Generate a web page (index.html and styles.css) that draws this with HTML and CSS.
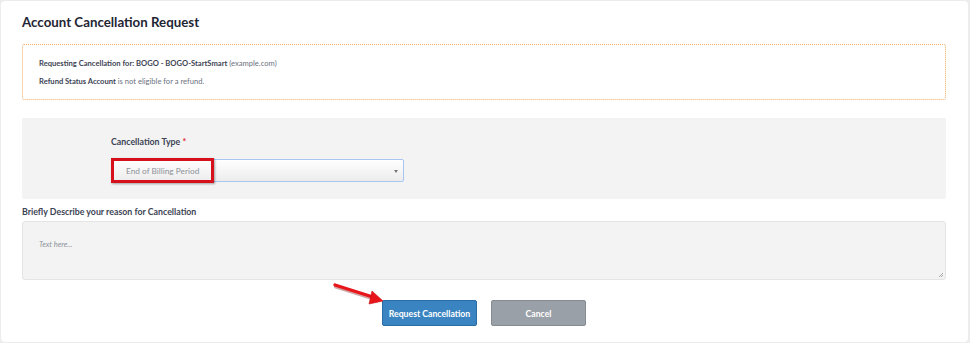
FILE: index.html
```html
<!DOCTYPE html>
<html lang="en">
<head>
    <meta charset="UTF-8">
    <title>Account Cancellation Request</title>
    <link rel="stylesheet" href="styles.css">
</head>
<body>
    <div class="card">
        <h1 class="title">Account Cancellation Request</h1>
        <div class="notice">
            <p><b>Requesting Cancellation for: BOGO - BOGO-StartSmart</b> <span class="muted">(example.com)</span></p>
            <p><b>Refund Status Account</b> <span class="muted">is not eligible for a refund.</span></p>
        </div>
        <div class="panel">
            <label class="label">Cancellation Type <span class="req">*</span></label>
            <div class="select">
                <span class="select-text">End of Billing Period</span>
                <span class="caret"></span>
                <span class="highlight"></span>
            </div>
        </div>
        <label class="label reason-label">Briefly Describe your reason for Cancellation</label>
        <div class="textarea">
            <span class="placeholder">Text here...</span>
            <svg class="grip" width="6" height="6" viewBox="0 0 6 6"><path d="M5 1 L1 5 M5 3 L3 5" stroke="#999" stroke-width="0.8"/></svg>
        </div>
        <div class="actions">
            <button class="btn btn-primary">Request Cancellation</button>
            <button class="btn btn-cancel">Cancel</button>
            <svg class="arrow" width="60" height="26" viewBox="0 0 60 26">
                <path d="M3 3 L44 16" stroke="#7a0000" stroke-width="4" stroke-linecap="round" opacity="0.35" transform="translate(1,1.5)"/>
                <path d="M3 3 L44 16" stroke="#e8161b" stroke-width="3.4" stroke-linecap="round"/>
                <path d="M40 9 L51 19 L37 22 Z" fill="#e8161b" stroke="#c40f13" stroke-width="0.6"/>
            </svg>
        </div>
    </div>
</body>
</html>
```

FILE: styles.css
```css
body { margin: 0; background: #ececec; font-family: "Lato", "Open Sans", sans-serif; color: #3a4150; }
.card { position: relative; box-sizing: border-box; width: 967px; height: 341px; margin: 1px 0 0 1px; background: #fff; border-radius: 4px; padding: 12px 22px 0 21px; }
.title { margin: 0 0 13px 0; font-size: 13.3px; line-height: 18px; font-weight: 700; color: #1f2633; }
.notice { height: 56px; box-sizing: border-box; border: 1px dotted #f2ad5c; border-radius: 2px; padding: 13px 16px 0 16px; }
.notice p { margin: 0 0 7px 0; font-size: 7.6px; line-height: 11px; }
.notice b { color: #3d4455; }
.muted { color: #6b7280; }
.panel { height: 81px; box-sizing: border-box; margin-top: 18px; background: #f3f3f3; border-radius: 2px; padding: 18px 0 0 89px; }
.label { display: block; font-size: 8.8px; line-height: 12px; font-weight: 700; color: #3d4455; }
.req { color: #e0262b; }
.select { position: relative; width: 293px; height: 23px; box-sizing: border-box; margin-top: 11px; border: 1px solid #a9c6f3; border-radius: 2px; background: linear-gradient(#ffffff, #ececec); display: flex; align-items: center; padding-left: 14px; }
.select-text { font-size: 8.3px; color: #8d9199; }
.caret { position: absolute; right: 5px; top: 10px; border-left: 2px solid transparent; border-right: 2px solid transparent; border-top: 3px solid #777; }
.highlight { position: absolute; left: -1px; top: -2px; width: 103px; height: 25px; box-sizing: border-box; border: 3px solid #d6111b; box-shadow: 1px 1px 2px rgba(0,0,0,0.35); }
.reason-label { margin-top: 7px; }
.textarea { position: relative; height: 59px; box-sizing: border-box; margin-top: 3px; background: #f3f3f3; border: 1px solid #e4e4e4; border-radius: 3px; padding: 9px 16px; }
.placeholder { font-size: 7.5px; font-style: italic; color: #8f949b; }
.grip { position: absolute; right: 1px; bottom: 1px; }
.actions { position: relative; display: flex; justify-content: center; gap: 14px; margin-top: 20px; }
.btn { width: 95px; height: 26px; padding: 0; white-space: nowrap; border-radius: 2px; font-family: inherit; font-size: 8.7px; font-weight: 700; color: #fff; cursor: pointer; }
.btn-primary { background: #3a84c1; border: 1px solid #2a6da6; }
.btn-cancel { background: #9aa0a7; border: 1px solid #868b92; }
.arrow { position: absolute; left: 310px; top: -18px; }
```
